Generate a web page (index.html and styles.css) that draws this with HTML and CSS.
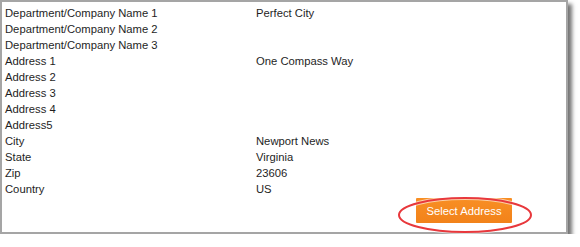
FILE: index.html
```html
<!DOCTYPE html>
<html>
<head>
<meta charset="utf-8">
<link rel="stylesheet" href="styles.css">
</head>
<body>
<div class="frame">
  <div class="rows">
    <div class="row"><span class="label">Department/Company Name 1</span><span class="value">Perfect City</span></div>
    <div class="row"><span class="label">Department/Company Name 2</span><span class="value"></span></div>
    <div class="row"><span class="label">Department/Company Name 3</span><span class="value"></span></div>
    <div class="row"><span class="label">Address 1</span><span class="value">One Compass Way</span></div>
    <div class="row"><span class="label">Address 2</span><span class="value"></span></div>
    <div class="row"><span class="label">Address 3</span><span class="value"></span></div>
    <div class="row"><span class="label">Address 4</span><span class="value"></span></div>
    <div class="row"><span class="label">Address5</span><span class="value"></span></div>
    <div class="row"><span class="label">City</span><span class="value">Newport News</span></div>
    <div class="row"><span class="label">State</span><span class="value">Virginia</span></div>
    <div class="row"><span class="label">Zip</span><span class="value">23606</span></div>
    <div class="row"><span class="label">Country</span><span class="value">US</span></div>
  </div>
  <div class="actions">
    <div class="btn-wrap">
      <button class="btn">Select Address</button>
      <svg class="callout" width="136" height="38" viewBox="0 0 136 38">
        <ellipse cx="68" cy="19" rx="66" ry="17" fill="none" stroke="#ffffff" stroke-width="4" opacity="0.6"/>
        <ellipse cx="68" cy="19" rx="66" ry="17" fill="none" stroke="#e8383c" stroke-width="2"/>
      </svg>
    </div>
  </div>
</div>
</body>
</html>
```

FILE: styles.css
```css
html, body {
  margin: 0;
  padding: 0;
  background: #ffffff;
}
body {
  font-family: "Liberation Sans", Arial, sans-serif;
  font-size: 11.25px;
  color: #1e1e1e;
}
.frame {
  box-sizing: border-box;
  width: 568px;
  height: 234px;
  border: 2px solid #a5a5a5;
  background: #ffffff;
  box-shadow: 4px 4px 4px rgba(0, 0, 0, 0.55);
  padding: 3px 0 0 3px;
}
.rows {
  display: flex;
  flex-direction: column;
}
.row {
  display: grid;
  grid-template-columns: 251px 1fr;
  height: 16px;
  line-height: 16px;
}
.actions {
  display: flex;
  justify-content: flex-end;
  padding-right: 54px;
  margin-top: 1px;
}
.btn-wrap {
  position: relative;
}
.btn {
  display: block;
  width: 96px;
  height: 25px;
  border: none;
  border-radius: 1px;
  background: linear-gradient(#f88f24, #f2821a);
  color: #ffffff;
  font-family: "Liberation Sans", Arial, sans-serif;
  font-size: 11.25px;
  padding: 0;
}
.callout {
  position: absolute;
  left: -19px;
  top: -2px;
  pointer-events: none;
}
```
